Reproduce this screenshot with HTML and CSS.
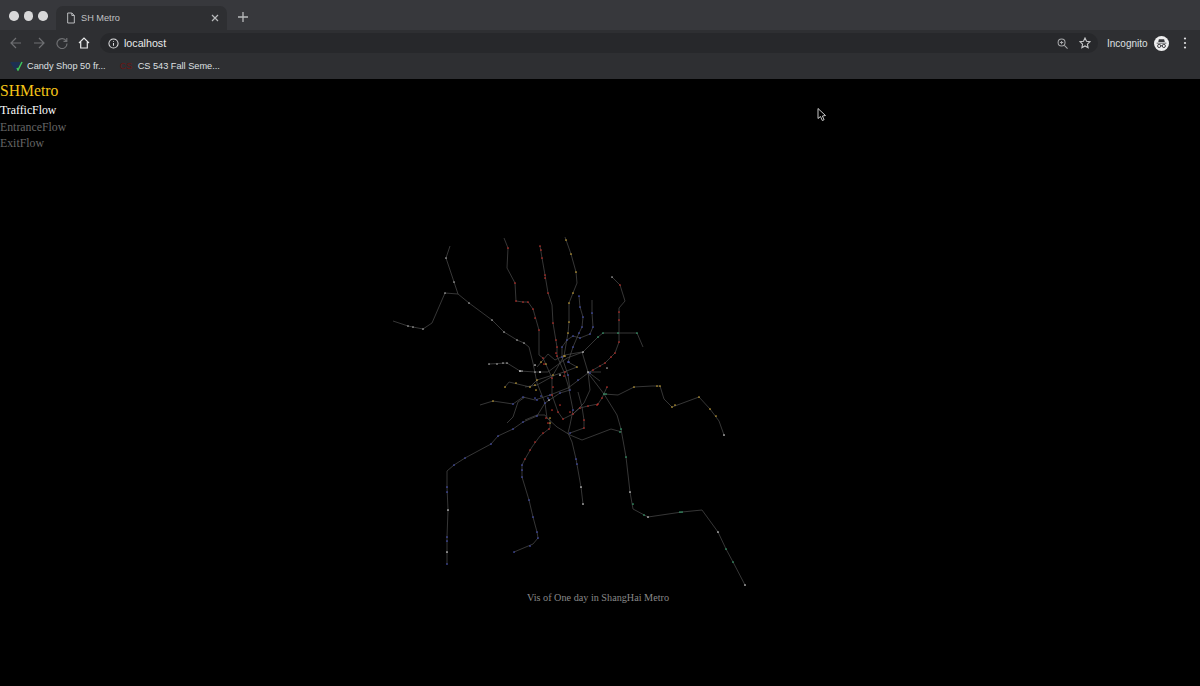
FILE: index.html
```html
<!DOCTYPE html>
<html lang="en">
<head>
<meta charset="utf-8">
<title>SH Metro</title>
<link rel="stylesheet" href="styles.css">
</head>
<body>
<header class="chrome">
  <div class="tabstrip">
    <div class="lights"><i></i><i></i><i></i></div>
    <div class="tab">
      <svg class="ic-doc" viewBox="0 0 12 14" width="10" height="12"><path d="M2 1h5l3 3v9H2zM7 1v3h3"/></svg>
      <span class="tab-title">SH Metro</span>
      <svg class="ic-close" viewBox="0 0 8 8" width="8" height="8"><path d="M1 1l6 6M7 1L1 7"/></svg>
    </div>
    <svg class="ic-new" viewBox="0 0 10 10" width="10" height="10"><path d="M5 0v10M0 5h10"/></svg>
  </div>
  <div class="toolbar">
    <svg class="tool dim" viewBox="0 0 12 12" width="12" height="12"><path d="M11 6H1M6 1L1 6l5 5"/></svg>
    <svg class="tool dim" viewBox="0 0 12 12" width="12" height="12"><path d="M1 6h10M6 1l5 5-5 5"/></svg>
    <svg class="tool dim" viewBox="0 0 12 12" width="12" height="12"><path d="M10.3 4A5 5 0 1 0 11 6.500M10.800 1v3.300H7.500"/></svg>
    <svg class="tool bright" viewBox="0 0 12 12" width="12" height="12"><path d="M1 6l5-5 5 5M2.700 5v6h6.600V5"/></svg>
    <div class="omnibox">
      <svg class="ic-info" viewBox="0 0 12 12" width="11" height="11"><circle cx="6" cy="6" r="5"/><path d="M6 5.500v3M6 3.200v1"/></svg>
      <span class="url">localhost</span>
      <span class="grow"></span>
      <svg class="ic-zoom" viewBox="0 0 12 12" width="11" height="11"><circle cx="5" cy="5" r="3.800"/><path d="M8 8l3.500 3.500M3.200 5h3.600M5 3.200v3.600"/></svg>
      <svg class="ic-star" viewBox="0 0 12 12" width="12" height="12"><path d="M6 1l1.500 3.300 3.500.4-2.600 2.400.7 3.500L6 8.900l-3.100 1.700.7-3.500L1 4.700l3.500-.4z"/></svg>
    </div>
    <span class="profile">Incognito</span>
    <svg class="ic-incog" viewBox="0 0 16 16" width="15" height="15">
      <circle class="disc" cx="8" cy="8" r="8"/>
      <path class="hat" d="M5.200 3.500h5.600l.7 3H4.500zM2.800 7.200h10.400v.9H2.800z"/>
      <circle class="lens" cx="5.500" cy="10.600" r="1.700"/><circle class="lens" cx="10.500" cy="10.600" r="1.700"/>
      <path class="lens" d="M7.200 10.400h1.600"/>
    </svg>
    <svg class="ic-menu" viewBox="0 0 4 12" width="4" height="12"><circle cx="2" cy="1.500" r="1.100"/><circle cx="2" cy="6" r="1.100"/><circle cx="2" cy="10.500" r="1.100"/></svg>
  </div>
  <div class="bookmarks">
    <div class="bookmark">
      <svg class="fav" viewBox="0 0 14 10" width="14" height="10"><path class="fav-navy" d="M0 1h11L5.500 10z"/><path class="fav-check" d="M7 7l1 2 4-8"/></svg>
      <span>Candy Shop 50 fr...</span>
    </div>
    <div class="bookmark">
      <span class="fav-cs">CS</span>
      <span>CS 543 Fall Seme...</span>
    </div>
  </div>
</header>
<main class="page">
  <nav class="menu">
    <div class="brand">SHMetro</div>
    <div class="item active">TrafficFlow</div>
    <div class="item">EntranceFlow</div>
    <div class="item">ExitFlow</div>
  </nav>
  <svg class="map" viewBox="0 79 1200 607" width="1200" height="607">
    <g class="lines">
      <path d="M393 321L408 326 413 327 423 329 432 323 445 293 458 294 469 303 492 320 504 332 517 340 524 343 529 347 533 363 537 383 545 403 547 418 550 420 550 428 540 436 532 447 525 459 522 465 522 477 529 500 533 517 537 532 538 538 533 544 514 552"/>
      <path d="M450 246L446 258 454 282 458 294"/>
      <path d="M504 238L508 248 507 268 515 283 516 301 523 302 528 302 533 309 539 330 539 347 539 355 543 358 552 378 552 395 558 412 563 419 573 414 580 408 588 406 598 404 602 398 607 387"/>
      <path d="M540 246L542 258 545 275 548 293 552 305 553 323 557 347 557 356 564 372 568 385 573 410 570 425 568 433 572 442 576 459 581 487 583 504"/>
      <path d="M565 237L571 254 576 272 577 283 573 293 569 303 569 322 568 333 564 356 553 375 537 380 530 387 509 382 505 387"/>
      <path d="M579 296L580 307 583 317 582 327 579 333 573 347 568 362 577 367 564 372 555 375 537 385 525 387"/>
      <path d="M592 300L592 313 593 327 590 334 580 338 573 336 567 340 562 347 562 357 568 375 570 390 560 393 545 403 537 416 523 422 513 429 498 436 491 444 465 458 454 465 447 471 447 487 448 510 447 537 447 552 447 564"/>
      <path d="M612 277L620 285 625 301 619 308 619 332 619 342 615 353 605 363 593 370 588 373 568 388 550 395 535 400 523 397 513 404 493 401 480 405"/>
      <path d="M643 347L637 333 618 333 603 333 598 337 583 352 567 358 560 363 548 372 540 372 535 372 520 371 507 363 489 364"/>
      <path d="M537 367L548 354 555 360 565 355 582 352 588 372 590 390 584 403 573 414"/>
      <path d="M588 373L604 394 617 415 621 429 626 457 630 492 633 509 648 517 682 512 702 510 718 532 726 549 733 562 745 585"/>
      <path d="M604 394L618 395 634 387 652 386 660 386 664 399 672 407 699 397 710 409 719 421 724 435"/>
      <path d="M547 418L557 427 570 435 582 440 590 437 611 429 622 432"/>
      <path d="M507 423L513 417 518 402 525 397"/>
      <path d="M570 433L584 428 584 420 582 407 578 392"/>
      <path d="M588 372L601 372M588 372L600 381"/>
      <path d="M525 420L537 415 545 415 547 418"/>
    </g>
    <g class="dots">
      <path class="d-grey" d="M408 326h0M413 327h0M423 329h0M469 303h0M492 320h0M504 332h0M517 340h0M524 343h0M446 258h0M454 282h0M445 293h0M489 364h0M497 364h0M503 363h0M507 363h0M520 371h0M522 371h0M535 372h0M540 372h0M612 277h0M607 368h0"/>
      <path class="d-red" d="M508 248h0M515 283h0M516 301h0M523 302h0M528 302h0M533 309h0M535 318h0M539 330h0M540 246h0M541 250h0M542 258h0M545 275h0M545 278h0M548 293h0M553 323h0M556 340h0M557 347h0M557 356h0M607 387h0M602 398h0M598 404h0M588 406h0M580 408h0M573 414h0M563 419h0M558 412h0M552 395h0M552 378h0M619 312h0M619 320h0M619 342h0M615 353h0M605 363h0M593 370h0M543 433h0M535 442h0M530 450h0M525 459h0M620 285h0M584 420h0M584 428h0M546 418h0M548 423h0M543 358h0M556 353h0M565 372h0M564 376h0M553 387h0M560 405h0M570 412h0M611 357h0M600 366h0M552 410h0M544 364h0M597 405h0M549 429h0"/>
      <path class="d-yellow" d="M566 240h0M571 254h0M576 272h0M573 293h0M569 303h0M569 322h0M568 333h0M564 356h0M553 375h0M530 387h0M505 387h0M516 383h0M537 380h0M541 362h0M546 364h0M577 367h0M550 418h0M550 423h0M660 386h0M657 386h0M634 387h0M672 407h0M675 405h0M699 397h0M710 409h0M716 416h0M493 401h0M535 385h0M536 390h0M565 356h0"/>
      <path class="d-blue" d="M579 296h0M580 307h0M583 317h0M582 327h0M579 333h0M573 347h0M568 362h0M592 313h0M593 327h0M590 334h0M580 338h0M573 336h0M567 340h0M562 347h0M562 357h0M568 375h0M570 390h0M560 393h0M550 395h0M537 400h0M523 397h0M513 404h0M545 403h0M537 416h0M523 422h0M513 429h0M498 436h0M491 444h0M465 458h0M454 465h0M447 487h0M447 492h0M447 537h0M447 541h0M447 564h0M522 465h0M522 470h0M522 477h0M529 500h0M533 517h0M537 532h0M538 538h0M530 546h0M514 552h0M576 459h0M577 464h0M570 433h0M590 373h0M578 380h0M573 410h0M569 362h0M535 398h0M541 396h0M548 398h0"/>
      <path class="d-green" d="M637 333h0M618 333h0M603 333h0M598 337h0M604 394h0M606 394h0M621 429h0M626 457h0M633 504h0M644 515h0M682 512h0M680 512h0M726 549h0M733 562h0M620 432h0"/>
      <path class="d-white" d="M520 371h0M540 372h0M535 365h0M549 400h0M560 375h0M583 352h0M588 372h0M630 492h0M648 517h0M718 532h0M745 585h0M583 504h0M581 487h0M448 510h0M447 552h0M724 435h0"/>
    </g>
    <text class="caption" x="527" y="601">Vis of One day in ShangHai Metro</text>
  </svg>
  <svg class="cursor" viewBox="0 0 10 14" width="10" height="15"><path d="M1 1v10l2.500-2 1.800 4 1.800-.8L5.400 8.500 8.500 8z"/></svg>
</main>
</body>
</html>
```
FILE: styles.css
```css
* { box-sizing: border-box; }
html, body { margin: 0; height: 100%; background: #000; overflow: hidden; }
body { display: flex; flex-direction: column; font-family: "Liberation Sans", Arial, sans-serif; }

.chrome { flex: none; background: #2e2f32; color: #dfe0e2; font-size: 9.200px; }
.tabstrip { height: 30px; display: flex; align-items: flex-end; background: #37383c; padding-left: 9px; }
.lights { display: flex; gap: 5px; align-self: flex-start; margin-top: 11px; width: 47px; }
.lights i { width: 9.500px; height: 9.500px; border-radius: 50%; background: #d8d8d9; }
.tab { width: 171px; height: 24px; display: flex; align-items: center; background: #2e2f32; border-radius: 7px 7px 0 0; padding: 0 8px 0 10px; gap: 5px; }
.tab-title { flex: 1; color: #c0c1c3; font-size: 9.200px; }
.ic-doc path { fill: none; stroke: #c6c7c9; stroke-width: 1.100; }
.ic-close path { fill: none; stroke: #b9babc; stroke-width: 1.200; }
.ic-new { margin: 0 0 8px 11px; }
.ic-new path { stroke: #b9babc; stroke-width: 1.300; }

.toolbar { height: 26px; display: flex; align-items: center; padding: 0 12px 0 10px; }
.tool { margin-right: 11px; flex: none; }
.tool path { fill: none; stroke-width: 1.200; }
.tool.dim path { stroke: #6f7073; }
.tool.bright { margin-left: -1px; }
.tool.bright path { stroke: #e8e9ea; }
.omnibox { width: 998px; height: 20px; margin-left: -1px; display: flex; align-items: center; padding: 0 7px 0 8px; background: #27282b; border-radius: 10px; }
.ic-info { flex: none; }
.ic-info circle, .ic-info path { fill: none; stroke: #dfe0e2; stroke-width: 1.100; }
.url { margin-left: 5px; color: #e8e9ea; font-size: 10.700px; }
.grow { flex: 1; }
.ic-zoom { margin-right: 11px; }
.ic-zoom circle, .ic-zoom path { fill: none; stroke: #a9aaac; stroke-width: 1.100; }
.ic-star path { fill: none; stroke: #c6c7c9; stroke-width: 1.100; }
.profile { margin-left: 9px; color: #dfe0e2; font-size: 10px; }
.ic-incog { margin-left: 6px; flex: none; }
.disc { fill: #eeeeef; }
.hat { fill: #37383c; }
.lens { fill: none; stroke: #37383c; stroke-width: 1; }
.ic-menu { margin-left: 14px; flex: none; fill: #dfe0e2; }

.bookmarks { height: 23px; display: flex; align-items: center; padding: 0 0 4px 10px; gap: 14px; font-size: 9.200px; color: #dfe0e2; }
.bookmark { display: flex; align-items: center; gap: 3px; }
.fav-navy { fill: #1d2f52; }
.fav-check { fill: none; stroke: #3fc65d; stroke-width: 1.500; }
.fav-cs { color: #6b1412; font-size: 9px; width: 15px; }

.page { flex: 1; position: relative; background: #000; font-family: "Liberation Serif", "Times New Roman", serif; }
.menu { position: relative; z-index: 1; display: flex; flex-direction: column; padding-top: 2px; }
.brand { color: #f5c518; font-size: 15.700px; line-height: 19px; margin-bottom: 2px; }
.item { color: #666; font-size: 11.800px; line-height: 16.500px; }
.item.active { color: #fff; }

.map { position: absolute; inset: 0; display: block; }
.lines path { fill: none; stroke: #4e4e4e; stroke-width: .7; }
.dots path { fill: none; stroke-linecap: round; stroke-width: 1.700; }
.d-grey { stroke: #aaa; }
.d-red { stroke: #c4302a; }
.d-yellow { stroke: #c9a437; }
.d-blue { stroke: #4a55b8; }
.d-green { stroke: #3aa874; }
.d-white { stroke: #ddd; }
.caption { fill: #888; font-size: 10.200px; font-family: "Liberation Serif", "Times New Roman", serif; }

.cursor { position: absolute; left: 817px; top: 28px; }
.cursor path { fill: #000; stroke: #ddd; stroke-width: .9; }
```
